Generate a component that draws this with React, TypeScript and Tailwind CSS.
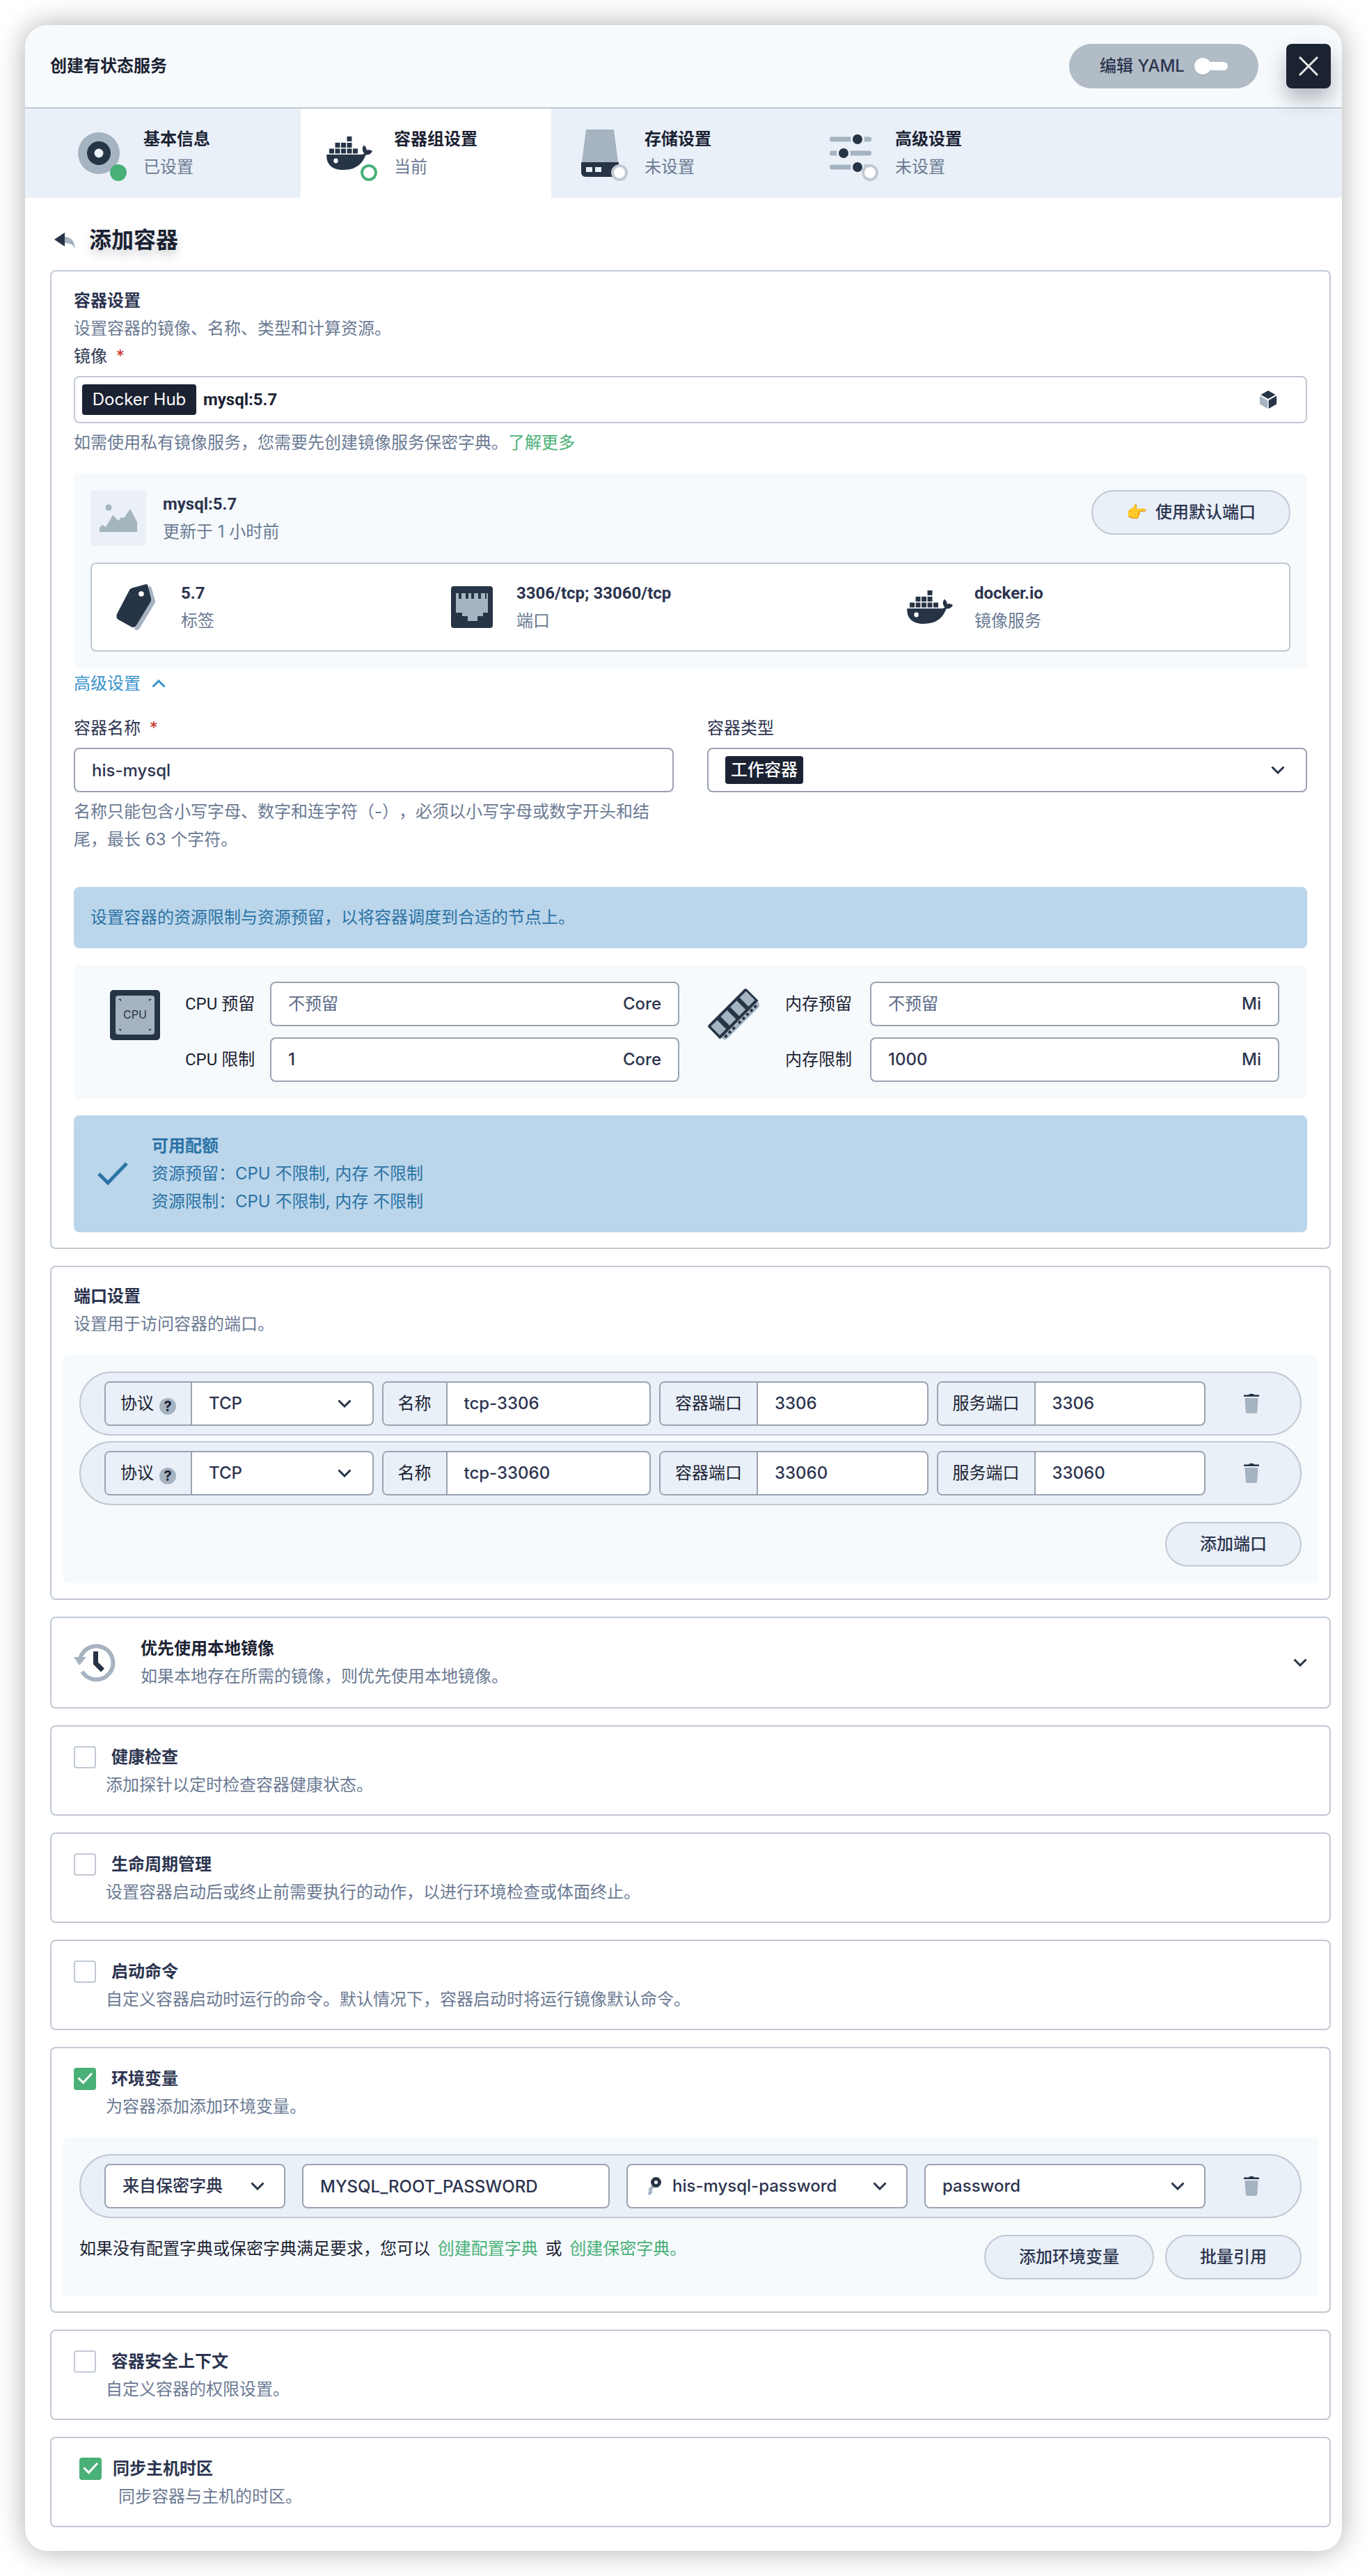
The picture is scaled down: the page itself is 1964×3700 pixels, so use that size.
import React, { useId, useState } from "react";

const cx = (...parts: (string | false | undefined)[]) => parts.filter(Boolean).join(" ");

/* ---------- icons ---------- */

function Chevron({ up, className }: { up?: boolean; className?: string }) {
  return (
    <svg viewBox="0 0 20 12" className={cx("h-3 w-5 shrink-0", className)} fill="none" stroke="currentColor" strokeWidth="3" aria-hidden="true">
      <path d={up ? "M1.5 10.5 10 2l8.5 8.5" : "M1.5 1.5 10 10l8.5-8.5"} />
    </svg>
  );
}

function DockerIcon() {
  return (
    <svg viewBox="0 0 66 48" className="h-12 w-[66px] shrink-0" fill="#273446" aria-hidden="true">
      <rect x="29.5" y="0" width="7" height="7" />
      <path d="M12.5 9h7v7h-7zM21 9h7v7h-7zM29.5 9h7v7h-7z" />
      <path d="M4 17.5h7v7H4zM12.5 17.5h7v7h-7zM21 17.5h7v7h-7zM29.5 17.5h7v7h-7zM38 17.5h7v7h-7z" />
      <path d="M.3 26H48c3 0 5-.4 6.500-1.500C51 20.500 51 15.500 54 12.500c2.500 2.200 3.800 4.700 3.700 7.200 3-.9 6-.3 8.300 1.300-1.800 4-5 5.700-9.500 5.600C51.500 40 42 48 24 48 8 48-.8 39.500.3 26Z" />
      <ellipse cx="13.500" cy="35" rx="3.200" ry="3.400" fill="#fff" />
    </svg>
  );
}

function DiscIcon() {
  return (
    <svg viewBox="0 0 60 60" className="size-[60px]" aria-hidden="true">
      <circle cx="30" cy="30" r="30" fill="#a6b3c1" />
      <circle cx="30" cy="30" r="17" fill="#273446" />
      <circle cx="30" cy="30" r="6.500" fill="#e9f0f8" />
    </svg>
  );
}

function DriveIcon() {
  return (
    <svg viewBox="0 0 60 68" className="h-[68px] w-[60px]" aria-hidden="true">
      <path d="M10 0h40l6 47H4z" fill="#a6b3c1" />
      <path d="M3 47h54v17a4 4 0 0 1-4 4H9a6 6 0 0 1-6-6z" fill="#273446" />
      <path d="M10 54h9v7h-9zM23 54h9v7h-9z" fill="#e9f0f8" />
    </svg>
  );
}

function SlidersIcon() {
  return (
    <svg viewBox="0 0 60 60" className="size-[60px]" aria-hidden="true">
      <g fill="#a6b3c1">
        <rect y="6.500" width="60" height="7" rx="3" />
        <rect y="26.500" width="60" height="7" rx="3" />
        <rect y="46.500" width="60" height="7" rx="3" />
      </g>
      <g fill="#273446" stroke="#e9f0f8" strokeWidth="3">
        <circle cx="40" cy="10" r="8.500" />
        <circle cx="20" cy="30" r="8.500" />
        <circle cx="40" cy="50" r="8.500" />
      </g>
    </svg>
  );
}

function BackIcon() {
  return (
    <svg viewBox="0 0 30 24" className="h-6 w-[30px]" aria-hidden="true">
      <path d="M14 7c9 0 15 5 16 17-3-6-8-8-16-8z" fill="#a6b3c1" />
      <path d="M15 1v20L0 11z" fill="#273446" />
    </svg>
  );
}

function CubeIcon() {
  return (
    <svg viewBox="0 0 24 26" className="h-[26px] w-6" aria-hidden="true">
      <path d="M12 0 22.500 6 12 12 1.500 6z" fill="#273446" />
      <path d="M0 7.500 11.300 14v12L0 19.500z" fill="#a6b3c1" />
      <path d="M24 7.500 12.700 14v12L24 19.500z" fill="#273446" />
    </svg>
  );
}

function PictureIcon() {
  return (
    <svg viewBox="0 0 54 40" className="h-10 w-[54px]" fill="#a5b5bd" aria-hidden="true">
      <circle cx="13" cy="5" r="4.500" />
      <path d="M0 40v-6l4-4 5 3 10-17 8 8 4-5 4 1 9-13 10 19v17z" />
    </svg>
  );
}

function TagIcon() {
  return (
    <svg viewBox="0 0 60 68" className="h-[68px] w-[60px] shrink-0" aria-hidden="true">
      <path d="M48 4q3 0 3.500 2L57 25q.5 2-1 4L35 64q-3 5-8 2L40 30z" fill="#a6b3c1" />
      <path d="M24 6.500 44 1q2 0 2.500 2l4.500 19q.5 3-1 5L30 60q-3 5-8 2L4 52q-4-3-2-8L20 9.500q1.500-2.500 4-3z" fill="#273446" />
      <circle cx="37" cy="15" r="3.800" fill="#fff" />
    </svg>
  );
}

function PortIcon() {
  return (
    <svg viewBox="0 0 60 60" className="size-[60px] shrink-0" aria-hidden="true">
      <rect width="60" height="60" rx="4" fill="#273446" />
      <path d="M7 10h4v8h4v-8h6v8h4v-8h4v8h4v-8h6v8h4v-8h6v8h2v-8h2v28h-7v5h-8v7H24v-7h-8v-5H7z" fill="#a6b3c1" />
    </svg>
  );
}

function CpuIcon() {
  return (
    <svg viewBox="0 0 72 72" className="size-[72px]" aria-hidden="true">
      <rect width="72" height="72" rx="5" fill="#273446" />
      <rect x="8" y="8" width="56" height="56" rx="4" fill="#a6b3c1" />
      <path d="M12 13h4v3zM60 13h-4v3zM12 56l4 3v-3zM60 56l-4 3v-3z" fill="#273446" />
      <text x="36" y="41" textAnchor="middle" fontSize="16" fill="#273446">CPU</text>
    </svg>
  );
}

function MemoryIcon() {
  return (
    <svg viewBox="0 0 78 78" className="size-[78px]" aria-hidden="true">
      <g transform="translate(0 56) rotate(-45)">
        <rect x="3" y="16" width="73" height="17" rx="5" fill="#a6b3c1" />
        <path d="M3 0h72q3 0 3 3v23H0V3q0-3 3-3z" fill="#273446" />
        <path d="M3.500 4h13v18h-13zM23.500 4h13v18h-13zM43 4h13v18H43zM62 4h13v18H62z" fill="#a6b3c1" />
        <path d="M7 27h4v4H7zM15 27h4v4h-4zM23 27h4v4h-4zM35 27h4v4h-4zM43 27h4v4h-4zM51 27h4v4h-4zM59 27h4v4h-4zM67 27h4v4h-4z" fill="#273446" />
      </g>
    </svg>
  );
}

function HistoryIcon() {
  return (
    <svg viewBox="0 0 60 56" className="h-14 w-[60px]" fill="none" aria-hidden="true">
      <path d="M9 23a24 24 0 1 1 3 18" stroke="#a6b3c1" strokeWidth="6" />
      <path d="M0 20h18L8 32z" fill="#a6b3c1" />
      <path d="M31.500 12v17l10 10" stroke="#273446" strokeWidth="7" />
    </svg>
  );
}

function TrashIcon() {
  return (
    <svg viewBox="0 0 22 28" className="h-7 w-[22px]" aria-hidden="true">
      <path d="M1.500 6h19l-1.200 19.500q-.2 2.500-2.500 2.500H5.200q-2.300 0-2.500-2.500z" fill="#a6b3c1" />
      <path d="M7 1.500Q7.500 0 9 0h4q1.500 0 2 1.500h6.200q.8 0 .8.800V4H0V2.300q0-.8.8-.8z" fill="#273446" />
    </svg>
  );
}

function KeyIcon() {
  return (
    <svg viewBox="0 0 20 26" className="ml-1 h-[26px] w-5 shrink-0" fill="none" aria-hidden="true">
      <path d="M10 11 4 18l1 3-3 4" stroke="#a6b3c1" strokeWidth="4.500" />
      <circle cx="12.500" cy="7.500" r="5" stroke="#273446" strokeWidth="5" />
    </svg>
  );
}

/* ---------- building blocks ---------- */

function Card({ children, className }: { children: React.ReactNode; className?: string }) {
  return <section className={cx("rounded-lg border-2 border-[#c1c9d3] px-8", className)}>{children}</section>;
}

function PillButton({ children, className }: { children: React.ReactNode; className?: string }) {
  return (
    <button type="button" className={cx("h-16 shrink-0 rounded-full border-2 border-[#c1c9d3] bg-[#e9f0f8] px-12 font-medium text-[#2c344f]", className)}>
      {children}
    </button>
  );
}

function SelectBox({ label, value, className, icon }: { label: string; value: string; className?: string; icon?: React.ReactNode }) {
  return (
    <div className={cx("relative flex h-16 min-w-0 items-center gap-4 rounded-lg border-2 border-[#9ba3b1] bg-white pl-6", className)}>
      {icon}
      <select aria-label={label} className="h-full w-full min-w-0 appearance-none bg-transparent pr-16 font-medium text-[#2c344f]">
        <option>{value}</option>
      </select>
      <Chevron className="pointer-events-none absolute right-7 text-[#273446]" />
    </div>
  );
}

function AddonField({ label, value, help, select }: { label: string; value: string; help?: boolean; select?: boolean }) {
  const id = useId();
  return (
    <div className="relative flex h-16 min-w-0 flex-1 overflow-hidden rounded-lg border-2 border-[#9ba3b1] bg-white">
      <div className="flex shrink-0 items-center gap-2 border-r-2 border-[#9ba3b1] bg-[#e9f0f8] px-[21px] text-[#1b2232]">
        <label htmlFor={id}>{label}</label>
        {help && (
          <button type="button" aria-label="帮助" className="mt-2 flex size-6 items-center justify-center rounded-full bg-[#a6b3c1] text-xl leading-6 font-bold">
            ?
          </button>
        )}
      </div>
      {select ? (
        <>
          <select id={id} className="min-w-0 flex-1 appearance-none bg-transparent px-6 font-medium text-[#2c344f]">
            <option>{value}</option>
          </select>
          <Chevron className="pointer-events-none absolute top-6 right-[30px] text-[#273446]" />
        </>
      ) : (
        <input id={id} defaultValue={value} className="w-0 min-w-0 flex-1 bg-transparent px-6 font-medium text-[#2c344f] outline-none" />
      )}
    </div>
  );
}

function DeleteButton() {
  return (
    <button type="button" aria-label="删除" className="flex h-16 w-[136px] shrink-0 items-center justify-center pr-1">
      <TrashIcon />
    </button>
  );
}

function PortRow({ name, port }: { name: string; port: string }) {
  return (
    <div className="flex items-center rounded-full border-2 border-[#c1c9d3] bg-[#e9f0f8] py-3 pl-[34px]">
      <div className="flex min-w-0 flex-1 gap-3">
        <AddonField label="协议" value="TCP" help select />
        <AddonField label="名称" value={name} />
        <AddonField label="容器端口" value={port} />
        <AddonField label="服务端口" value={port} />
      </div>
      <DeleteButton />
    </div>
  );
}

function Checkbox({ id, checked }: { id: string; checked?: boolean }) {
  const [on, setOn] = useState(Boolean(checked));
  return (
    <span className="relative flex size-8 shrink-0">
      <input
        id={id}
        type="checkbox"
        checked={on}
        onChange={(e) => setOn(e.target.checked)}
        className="size-8 appearance-none rounded border-2 border-[#c1c9d3] bg-white checked:border-[#49b077] checked:bg-[#49b077]"
      />
      {on && (
        <svg viewBox="0 0 32 32" className="pointer-events-none absolute inset-0" fill="none" stroke="#fff" strokeWidth="3" aria-hidden="true">
          <path d="m6.500 14.500 7 7L26 8" />
        </svg>
      )}
    </span>
  );
}

function OptionHead({ title, note, checked, inset }: { title: string; note: string; checked?: boolean; inset?: boolean }) {
  const id = useId();
  return (
    <div className={inset ? "pl-2" : undefined}>
      <div className={cx("flex items-center", inset ? "gap-4" : "gap-[22px]")}>
        <Checkbox id={id} checked={checked} />
        <label htmlFor={id} className="font-bold text-[#2c344f]">{title}</label>
      </div>
      <p className={cx("text-[#6b7a93]", inset ? "pl-14" : "pl-[46px]")}>{note}</p>
    </div>
  );
}

function OptionCard(props: { title: string; note: string; checked?: boolean; inset?: boolean }) {
  return (
    <Card className="pt-6 pb-[22px]">
      <OptionHead {...props} />
    </Card>
  );
}

function Tab({ icon, title, state, first, status }: { icon: React.ReactNode; title: string; state: string; first?: boolean; status: "done" | "current" | "todo" }) {
  return (
    <button
      type="button"
      role="tab"
      aria-selected={status === "current"}
      className={cx("flex h-32 items-center gap-[34px] text-left", first ? "w-[396px] pl-[76px]" : "w-[360px] pl-10", status === "current" && "bg-white")}
    >
      <span className="relative flex size-[60px] items-center justify-center">
        {icon}
        <span
          className={cx(
            "absolute -right-2.5 -bottom-2.5 size-6 rounded-full",
            status === "done" && "bg-[#49b077]",
            status === "current" && "border-4 border-[#49b077] bg-white",
            status === "todo" && "border-4 border-[#c1c9d3] bg-white",
          )}
        />
      </span>
      <span className="flex flex-col">
        <span className="font-bold text-[#1b2232]">{title}</span>
        <span className="text-[#6b7a93]">{state}</span>
      </span>
    </button>
  );
}

function ImageFact({ icon, value, label }: { icon: React.ReactNode; value: string; label: string }) {
  return (
    <div className="flex items-center gap-[34px]">
      <span className="flex w-[60px] shrink-0 justify-center">{icon}</span>
      <div>
        <p className="font-['Roboto','Noto_Sans_CJK_SC',sans-serif] font-bold text-[#2c344f]">{value}</p>
        <p className="text-[#6b7a93]">{label}</p>
      </div>
    </div>
  );
}

function ResourceField({ label, value, placeholder, unit }: { label: string; value?: string; placeholder?: string; unit: string }) {
  const id = useId();
  return (
    <div className="flex items-center">
      <label htmlFor={id} className="w-[122px] shrink-0 font-['Roboto','Noto_Sans_CJK_SC',sans-serif] text-[#1b2232]">{label}</label>
      <div className="flex h-16 min-w-0 flex-1 items-center rounded-lg border-2 border-[#9ba3b1] bg-white px-6 font-medium text-[#2c344f]">
        <input id={id} defaultValue={value} placeholder={placeholder} className="min-w-0 flex-1 bg-transparent outline-none placeholder:font-normal placeholder:text-[#5d6a87]" />
        <span>{unit}</span>
      </div>
    </div>
  );
}

/* ---------- page ---------- */

export default function App() {
  return (
    <main className="bg-white p-9 font-['Inter','Noto_Sans_CJK_SC',sans-serif] text-2xl leading-10 text-[#1b2232] [text-spacing-trim:space-all]">
      <div className="overflow-clip rounded-[32px] bg-white shadow-[0_0_40px_rgba(0,0,0,0.32)]">
        <header className="flex h-[120px] items-center border-b-2 border-[#c1c9d3] bg-[#f6fafd] pr-4 pl-9">
          <h1 className="flex-1 font-bold">创建有状态服务</h1>
          <button type="button" role="switch" aria-checked="false" className="mr-10 flex h-16 w-[272px] items-center justify-center gap-3.5 rounded-full bg-[#b1bcc6] font-medium text-[#2c344f]">
            编辑 YAML
            <span className="flex items-center">
              <span className="z-10 size-6 rounded-full bg-white shadow" />
              <span className="-ml-3 h-3 w-9 rounded-full bg-white" />
            </span>
          </button>
          <button type="button" aria-label="关闭" className="flex size-16 items-center justify-center rounded-lg bg-[#1b2232] shadow-[0_16px_28px_rgba(27,34,50,0.3)]">
            <svg viewBox="0 0 28 28" className="size-7" stroke="#e8e8e8" strokeWidth="3" aria-hidden="true">
              <path d="m1 1 26 26M27 1 1 27" />
            </svg>
          </button>
        </header>

        <nav role="tablist" className="flex bg-[#e9f0f8]">
          <Tab first icon={<DiscIcon />} title="基本信息" state="已设置" status="done" />
          <Tab icon={<DockerIcon />} title="容器组设置" state="当前" status="current" />
          <Tab icon={<DriveIcon />} title="存储设置" state="未设置" status="todo" />
          <Tab icon={<SlidersIcon />} title="高级设置" state="未设置" status="todo" />
        </nav>

        <div className="pr-4 pb-[34px] pl-9">
          <div className="flex h-[104px] items-center gap-5 pt-[18px] pl-1.5">
            <button type="button" aria-label="返回">
              <BackIcon />
            </button>
            <h2 className="text-[32px] font-bold [text-shadow:0_8px_14px_rgba(27,34,50,0.2)]">添加容器</h2>
          </div>

          <div className="flex flex-col gap-6">
            <Card className="py-[22px]">
              <h3 className="font-bold text-[#2c344f]">容器设置</h3>
              <p className="text-[#6b7a93]">设置容器的镜像、名称、类型和计算资源。</p>
              <label htmlFor="image" className="block text-[#2c344f]">
                镜像 <span className="ml-1.5 text-[#c9302c]">*</span>
              </label>
              <div className="mt-2 flex h-[68px] items-center rounded-lg border-2 border-[#c1c9d3] pr-[42px] pl-2.5">
                <span className="flex h-11 w-[164px] items-center justify-center rounded bg-[#1b2232] text-white">Docker Hub</span>
                <input
                  id="image"
                  defaultValue="mysql:5.7"
                  className="min-w-0 flex-1 bg-transparent pl-2.5 font-['Roboto','Noto_Sans_CJK_SC',sans-serif] font-bold text-[#1b2232] outline-none"
                />
                <button type="button" aria-label="选择镜像">
                  <CubeIcon />
                </button>
              </div>
              <p className="mt-2 text-[#6b7a93]">
                如需使用私有镜像服务，您需要先创建镜像服务保密字典。<a href="#more" className="text-[#49b077]">了解更多</a>
              </p>

              <div className="mt-6 rounded-lg bg-[#f6fafd] p-6">
                <div className="flex items-start gap-6">
                  <div className="flex size-20 items-center justify-center rounded bg-[#ebeff7]">
                    <PictureIcon />
                  </div>
                  <div className="flex-1">
                    <p className="font-['Roboto','Noto_Sans_CJK_SC',sans-serif] font-bold text-[#2c344f]">mysql:5.7</p>
                    <p className="text-[#6b7a93]">更新于 1 小时前</p>
                  </div>
                  <PillButton className="flex items-center gap-3">
                    <span>👉</span>使用默认端口
                  </PillButton>
                </div>
                <div className="mt-6 grid h-32 grid-cols-[482fr_658fr_546fr] items-center rounded-lg border-2 border-[#c1c9d3] bg-white pl-[34px]">
                  <ImageFact icon={<TagIcon />} value="5.7" label="标签" />
                  <ImageFact icon={<PortIcon />} value="3306/tcp; 33060/tcp" label="端口" />
                  <ImageFact icon={<DockerIcon />} value="docker.io" label="镜像服务" />
                </div>
              </div>

              <button type="button" className="flex h-11 items-center gap-4 text-[#3793cb]">
                高级设置 <Chevron up />
              </button>

              <div className="mt-[22px] grid grid-cols-2 gap-12">
                <div>
                  <label htmlFor="cname" className="block text-[#2c344f]">
                    容器名称 <span className="ml-1.5 text-[#c9302c]">*</span>
                  </label>
                  <input id="cname" defaultValue="his-mysql" className="mt-2 block h-16 w-full rounded-lg border-2 border-[#9ba3b1] px-6 font-medium text-[#2c344f] outline-none" />
                  <p className="mt-2 text-[#6b7a93]">名称只能包含小写字母、数字和连字符（-），必须以小写字母或数字开头和结尾，最长 63 个字符。</p>
                </div>
                <div>
                  <label htmlFor="ctype" className="block text-[#2c344f]">容器类型</label>
                  <div className="mt-2 flex h-16 items-center justify-between rounded-lg border-2 border-[#9ba3b1] pr-[30px] pl-6">
                    <select id="ctype" className="h-10 appearance-none rounded bg-[#1b2232] px-2 font-medium text-white">
                      <option>工作容器</option>
                    </select>
                    <Chevron className="text-[#273446]" />
                  </div>
                </div>
              </div>

              <p className="mt-12 rounded-lg bg-[#bbd5ea] p-6 text-[#2a73a5]">设置容器的资源限制与资源预留，以将容器调度到合适的节点上。</p>

              <div className="mt-6 grid grid-cols-2 rounded-lg bg-[#f6fafd] p-6">
                <div className="flex pr-4 pl-7">
                  <div className="w-[108px] shrink-0 pt-3">
                    <CpuIcon />
                  </div>
                  <div className="flex min-w-0 flex-1 flex-col gap-4">
                    <ResourceField label="CPU 预留" placeholder="不预留" unit="Core" />
                    <ResourceField label="CPU 限制" value="1" unit="Core" />
                  </div>
                </div>
                <div className="flex pr-4 pl-6">
                  <div className="w-28 shrink-0 pt-2">
                    <MemoryIcon />
                  </div>
                  <div className="flex min-w-0 flex-1 flex-col gap-4">
                    <ResourceField label="内存预留" placeholder="不预留" unit="Mi" />
                    <ResourceField label="内存限制" value="1000" unit="Mi" />
                  </div>
                </div>
              </div>

              <div className="mt-6 flex items-center gap-[34px] rounded-lg bg-[#bbd5ea] py-6 pl-[34px] text-[#2a73a5]">
                <svg viewBox="0 0 44 34" className="h-[34px] w-11" fill="none" stroke="currentColor" strokeWidth="5" aria-hidden="true">
                  <path d="m2 17 13 13L42 2" />
                </svg>
                <div>
                  <p className="font-bold">可用配额</p>
                  <p>资源预留：CPU 不限制, 内存 不限制</p>
                  <p>资源限制：CPU 不限制, 内存 不限制</p>
                </div>
              </div>
            </Card>

            <Card className="py-[22px]">
              <h3 className="font-bold text-[#2c344f]">端口设置</h3>
              <p className="text-[#6b7a93]">设置用于访问容器的端口。</p>
              <div className="-mx-4 mt-6 flex flex-col gap-2 rounded-lg bg-[#f6fafd] p-6">
                <PortRow name="tcp-3306" port="3306" />
                <PortRow name="tcp-33060" port="33060" />
                <PillButton className="mt-4 self-end">添加端口</PillButton>
              </div>
            </Card>

            <Card className="flex items-center py-6">
              <div className="w-24">
                <HistoryIcon />
              </div>
              <div className="flex-1">
                <h3 className="font-bold">优先使用本地镜像</h3>
                <p className="text-[#6b7a93]">如果本地存在所需的镜像，则优先使用本地镜像。</p>
              </div>
              <button type="button" aria-label="展开">
                <Chevron className="text-[#273446]" />
              </button>
            </Card>

            <OptionCard title="健康检查" note="添加探针以定时检查容器健康状态。" />
            <OptionCard title="生命周期管理" note="设置容器启动后或终止前需要执行的动作，以进行环境检查或体面终止。" />
            <OptionCard title="启动命令" note="自定义容器启动时运行的命令。默认情况下，容器启动时将运行镜像默认命令。" />

            <Card className="pt-6 pb-[22px]">
              <OptionHead title="环境变量" note="为容器添加添加环境变量。" checked />
              <div className="-mx-4 mt-6 rounded-lg bg-[#f6fafd] p-6">
                <div className="flex items-center rounded-full border-2 border-[#c1c9d3] bg-[#e9f0f8] py-3 pl-[34px]">
                  <div className="grid min-w-0 flex-1 grid-cols-[260fr_442fr_404fr_404fr] gap-6">
                    <SelectBox label="来源" value="来自保密字典" />
                    <input aria-label="变量名" defaultValue="MYSQL_ROOT_PASSWORD" className="h-16 min-w-0 rounded-lg border-2 border-[#9ba3b1] bg-white px-6 font-medium text-[#2c344f] outline-none" />
                    <SelectBox label="保密字典" value="his-mysql-password" icon={<KeyIcon />} />
                    <SelectBox label="键" value="password" />
                  </div>
                  <DeleteButton />
                </div>
                <div className="mt-6 flex items-start gap-4">
                  <p className="flex-1">
                    如果没有配置字典或保密字典满足要求，您可以 <a href="#config" className="mx-1 text-[#49b077]">创建配置字典</a> 或 <a href="#secret" className="mx-1 text-[#49b077]">创建保密字典。</a>
                  </p>
                  <PillButton>添加环境变量</PillButton>
                  <PillButton>批量引用</PillButton>
                </div>
              </div>
            </Card>

            <OptionCard title="容器安全上下文" note="自定义容器的权限设置。" />
            <OptionCard title="同步主机时区" note="同步容器与主机的时区。" checked inset />
          </div>
        </div>
      </div>
    </main>
  );
}
